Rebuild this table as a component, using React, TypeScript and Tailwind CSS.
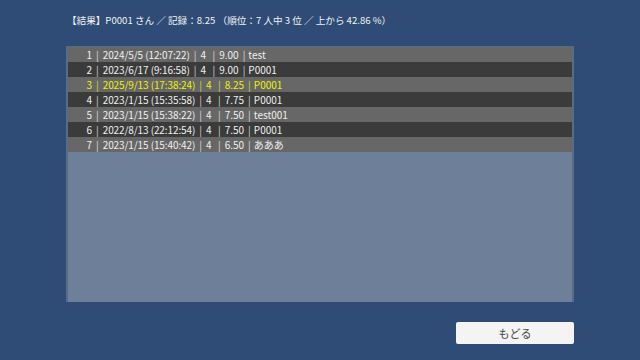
import React from "react";

const rows = [
  { n: "1", date: "2024/5/5 (12:07:22)", c: "4", s: "9.00", name: "test" },
  { n: "2", date: "2023/6/17 (9:16:58)", c: "4", s: "9.00", name: "P0001" },
  { n: "3", date: "2025/9/13 (17:38:24)", c: "4", s: "8.25", name: "P0001", hl: true },
  { n: "4", date: "2023/1/15 (15:35:58)", c: "4", s: "7.75", name: "P0001" },
  { n: "5", date: "2023/1/15 (15:38:22)", c: "4", s: "7.50", name: "test001" },
  { n: "6", date: "2022/8/13 (22:12:54)", c: "4", s: "7.50", name: "P0001" },
  { n: "7", date: "2023/1/15 (15:40:42)", c: "4", s: "6.50", name: "あああ" },
];

export default function App() {
  return (
    <div
      className="w-[640px] h-[360px] bg-[#2f4c77] flex flex-col overflow-hidden"
      style={{ fontFamily: '"Noto Sans CJK JP", "Noto Sans", sans-serif' }}
    >
      <div className="h-[40px] pl-[67px] pt-[13px] text-[9.6px] leading-[14px] text-[#f2f2f2] whitespace-pre">
        【結果】P0001 さん ／ 記録：8.25 （順位：7 人中 3 位 ／ 上から 42.86 %）
      </div>
      <div className="ml-[66px] mt-[6px] w-[508px] h-[256px] bg-[#6e7f99] border-t-[1px] border-l-[2px] border-r-[2px] border-[#5a6b86]">
        {rows.map((r, i) => (
          <div
            key={r.n}
            className={`h-[15px] flex items-center text-[10px] leading-[15px] whitespace-pre ${
              i % 2 === 0 ? "bg-[#676767]" : "bg-[#3b3b3b]"
            } ${r.hl ? "text-[#f0f000]" : "text-[#efefef]"}`}
          >
            <span className="w-[24px] text-right">{r.n}</span>
            <span className="px-[4px] opacity-80">|</span>
            <span className="tracking-[-0.1px]">{r.date}</span>
            <span className="px-[4px] opacity-80">|</span>
            <span className="w-[8px]">{r.c}</span>
            <span className="px-[4px] opacity-80">|</span>
            <span>{r.s}</span>
            <span className="pl-[4px] pr-[3px] opacity-80">|</span>
            <span>{r.name}</span>
          </div>
        ))}
      </div>
      <div className="flex justify-end pr-[66px] mt-[20px]">
        <button className="w-[118px] h-[22px] bg-[#f4f4f4] rounded-[2px] text-[11px] text-[#444444] flex items-center justify-center">
          もどる
        </button>
      </div>
    </div>
  );
}
